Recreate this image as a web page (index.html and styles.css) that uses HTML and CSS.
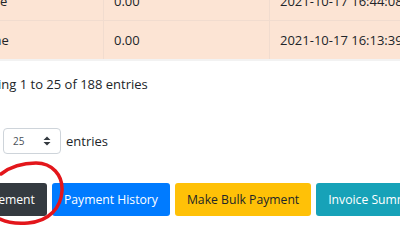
FILE: index.html
```html
<!DOCTYPE html>
<html>
<head>
<meta charset="utf-8">
<link rel="stylesheet" href="styles.css">
</head>
<body>
<div class="page">
  <table class="grid">
    <tr class="first">
      <td class="c1">Issue</td>
      <td class="c2">0.00</td>
      <td class="c3">2021-10-17 16:44:08</td>
    </tr>
    <tr>
      <td class="c1">None</td>
      <td class="c2">0.00</td>
      <td class="c3">2021-10-17 16:13:39</td>
    </tr>
  </table>
  <div class="info">Showing 1 to 25 of 188 entries</div>
  <div class="length">
    <span>Show</span>
    <span class="select"><span>25</span><svg class="caret" width="8" height="10" viewBox="0 0 8 10"><path d="M4 0.5 L7.5 4 H0.5 Z M4 9.5 L7.5 6 H0.5 Z" fill="#343a40"/></svg></span>
    <span>entries</span>
  </div>
  <div class="actions">
    <button class="btn dark">Statement</button>
    <button class="btn blue">Payment History</button>
    <button class="btn yellow">Make Bulk Payment</button>
    <button class="btn teal">Invoice Summary</button>
  </div>
</div>
<svg class="mark" width="80" height="70" viewBox="0 0 80 70">
  <path d="M1 13 C10 6 22 2 36 2 C52 2 63 14 62 30 C61 46 50 60 28 62 C16 63 6 61 0 58" fill="none" stroke="#e3161b" stroke-width="3.5" stroke-linecap="round"/>
</svg>
</body>
</html>
```
FILE: styles.css
```css
html, body {
  margin: 0;
  padding: 0;
  background: #fff;
  overflow: hidden;
  width: 400px;
  height: 250px;
}
body {
  position: relative;
  font-family: "Open Sans", "Noto Sans", sans-serif;
  font-size: 13px;
  color: #212529;
}
.page {
  margin-left: -35px;
  margin-top: -20px;
  width: 600px;
}
.grid {
  border-collapse: collapse;
  background: #fce4d4;
  width: 600px;
  border-bottom: 2px solid #f2f2f2;
}
.grid td {
  padding: 0 10px;
  height: 40px;
  box-sizing: border-box;
  border: 1px solid #f1dccf;
  white-space: nowrap;
}
.grid .first td { border-top: none; padding-top: 3px; }
.c1 { width: 138px; }
.c2 { width: 166px; }
.info {
  margin-top: 13px;
  line-height: 20px;
}
.length {
  margin-top: 34px;
  display: flex;
  align-items: center;
  gap: 5px;
}
.select {
  width: 58px;
  height: 26px;
  box-sizing: border-box;
  border: 1px solid #ced4da;
  border-radius: 4px;
  display: flex;
  align-items: center;
  justify-content: space-between;
  padding: 0 9px 0 9px;
  font-size: 10px;
  color: #495057;
}
.caret { display: block; }
.actions {
  margin-top: 29px;
  display: flex;
  gap: 5px;
  margin-left: -1px;
}
.btn {
  font-family: inherit;
  font-size: 12.2px;
  line-height: 19px;
  padding: 6px 11px;
  border: 1px solid transparent;
  border-radius: 3px;
  white-space: nowrap;
}
.dark { background: #343a40; color: #fff; }
.blue { background: #007bff; color: #fff; }
.yellow { background: #ffc107; color: #212529; }
.teal { background: #17a2b8; color: #fff; }
.mark {
  position: absolute;
  left: 0;
  top: 161px;
}
```
